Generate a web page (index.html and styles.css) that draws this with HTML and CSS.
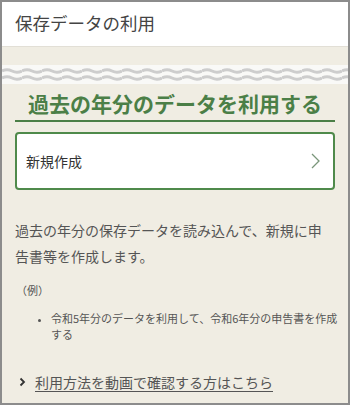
FILE: index.html
```html
<!DOCTYPE html>
<html lang="ja">
<head>
<meta charset="utf-8">
<link rel="stylesheet" href="styles.css">
</head>
<body>
<div class="frame">
  <header class="header">保存データの利用</header>
  <div class="wave">
    <svg width="100%" height="19" xmlns="http://www.w3.org/2000/svg">
      <defs>
        <pattern id="wv" width="20" height="19" patternUnits="userSpaceOnUse">
          <path d="M0 6 Q5 3.5 10 6 T20 6" fill="none" stroke="#cdcdcd" stroke-width="3"/>
          <path d="M0 13 Q5 10.5 10 13 T20 13" fill="none" stroke="#cdcdcd" stroke-width="3"/>
        </pattern>
      </defs>
      <rect width="100%" height="19" fill="#f9f9f7"/>
      <rect width="100%" height="19" fill="url(#wv)"/>
    </svg>
  </div>
  <main class="content">
    <h1 class="title">過去の年分のデータを利用する</h1>
    <a class="btn" href="#">
      <span>新規作成</span>
      <svg class="btn-chev" width="9" height="16" viewBox="0 0 9 16"><polyline points="1,1 8,8 1,15" fill="none" stroke="#7a967a" stroke-width="1.3"/></svg>
    </a>
    <p class="desc">過去の年分の保存データを読み込んで、新規に申告書等を作成します。</p>
    <p class="ex">（例）</p>
    <ul class="list">
      <li>令和5年分のデータを利用して、令和6年分の申告書を作成する</li>
    </ul>
    <div class="link-row">
      <svg class="link-chev" width="7" height="10" viewBox="0 0 7 10"><polyline points="1.5,1.5 5,5 1.5,8.5" fill="none" stroke="#333" stroke-width="1.8"/></svg>
      <a class="link" href="#">利用方法を動画で確認する方はこちら</a>
    </div>
  </main>
</div>
</body>
</html>
```
FILE: styles.css
```css
* { box-sizing: border-box; }
html, body { margin: 0; padding: 0; }
body {
  font-family: "Noto Sans CJK JP", "Noto Sans", sans-serif;
  color: #555;
}
.frame {
  width: 350px;
  height: 405px;
  border: 2px solid #8c8c8c;
  background: #f0ede3;
  overflow: hidden;
}
.header {
  height: 45px;
  background: #fff;
  border-bottom: 1px solid #e2dfd6;
  padding-left: 13px;
  font-size: 17.5px;
  line-height: 42px;
  color: #444;
}
.wave {
  margin-top: 18px;
  height: 19px;
}
.wave svg { display: block; }
.content {
  padding: 0 13px;
}
.title {
  margin: 7px 0 0;
  padding-bottom: 4px;
  border-bottom: 2px solid #4b7f47;
  font-size: 21px;
  line-height: 25px;
  font-weight: 700;
  color: #4b7f47;
  text-align: center;
}
.btn {
  margin-top: 10px;
  height: 58px;
  display: flex;
  align-items: center;
  justify-content: space-between;
  padding: 0 13px 0 9px;
  background: #fff;
  border: 2px solid #4f8a4b;
  border-radius: 4px;
  text-decoration: none;
  color: #333;
  font-size: 14px;
}
.btn-chev { display: block; }
.desc {
  margin: 27px 0 0;
  font-size: 14px;
  line-height: 26px;
  color: #555;
}
.ex {
  margin: 13px 0 0;
  padding-left: 1px;
  font-size: 11px;
  line-height: 16px;
  color: #555;
}
.list {
  margin: 12px -8px 0 0;
  padding-left: 36px;
  font-size: 11px;
  line-height: 16px;
  color: #555;
}
.list li::marker { font-size: 9px; }
.link-row {
  margin-top: 30px;
  display: flex;
  align-items: center;
  gap: 9px;
  padding-left: 4px;
}
.link-chev { display: block; }
.link {
  font-size: 14px;
  line-height: 20px;
  color: #555;
  text-decoration: underline;
  text-underline-offset: 3px;
}
```
